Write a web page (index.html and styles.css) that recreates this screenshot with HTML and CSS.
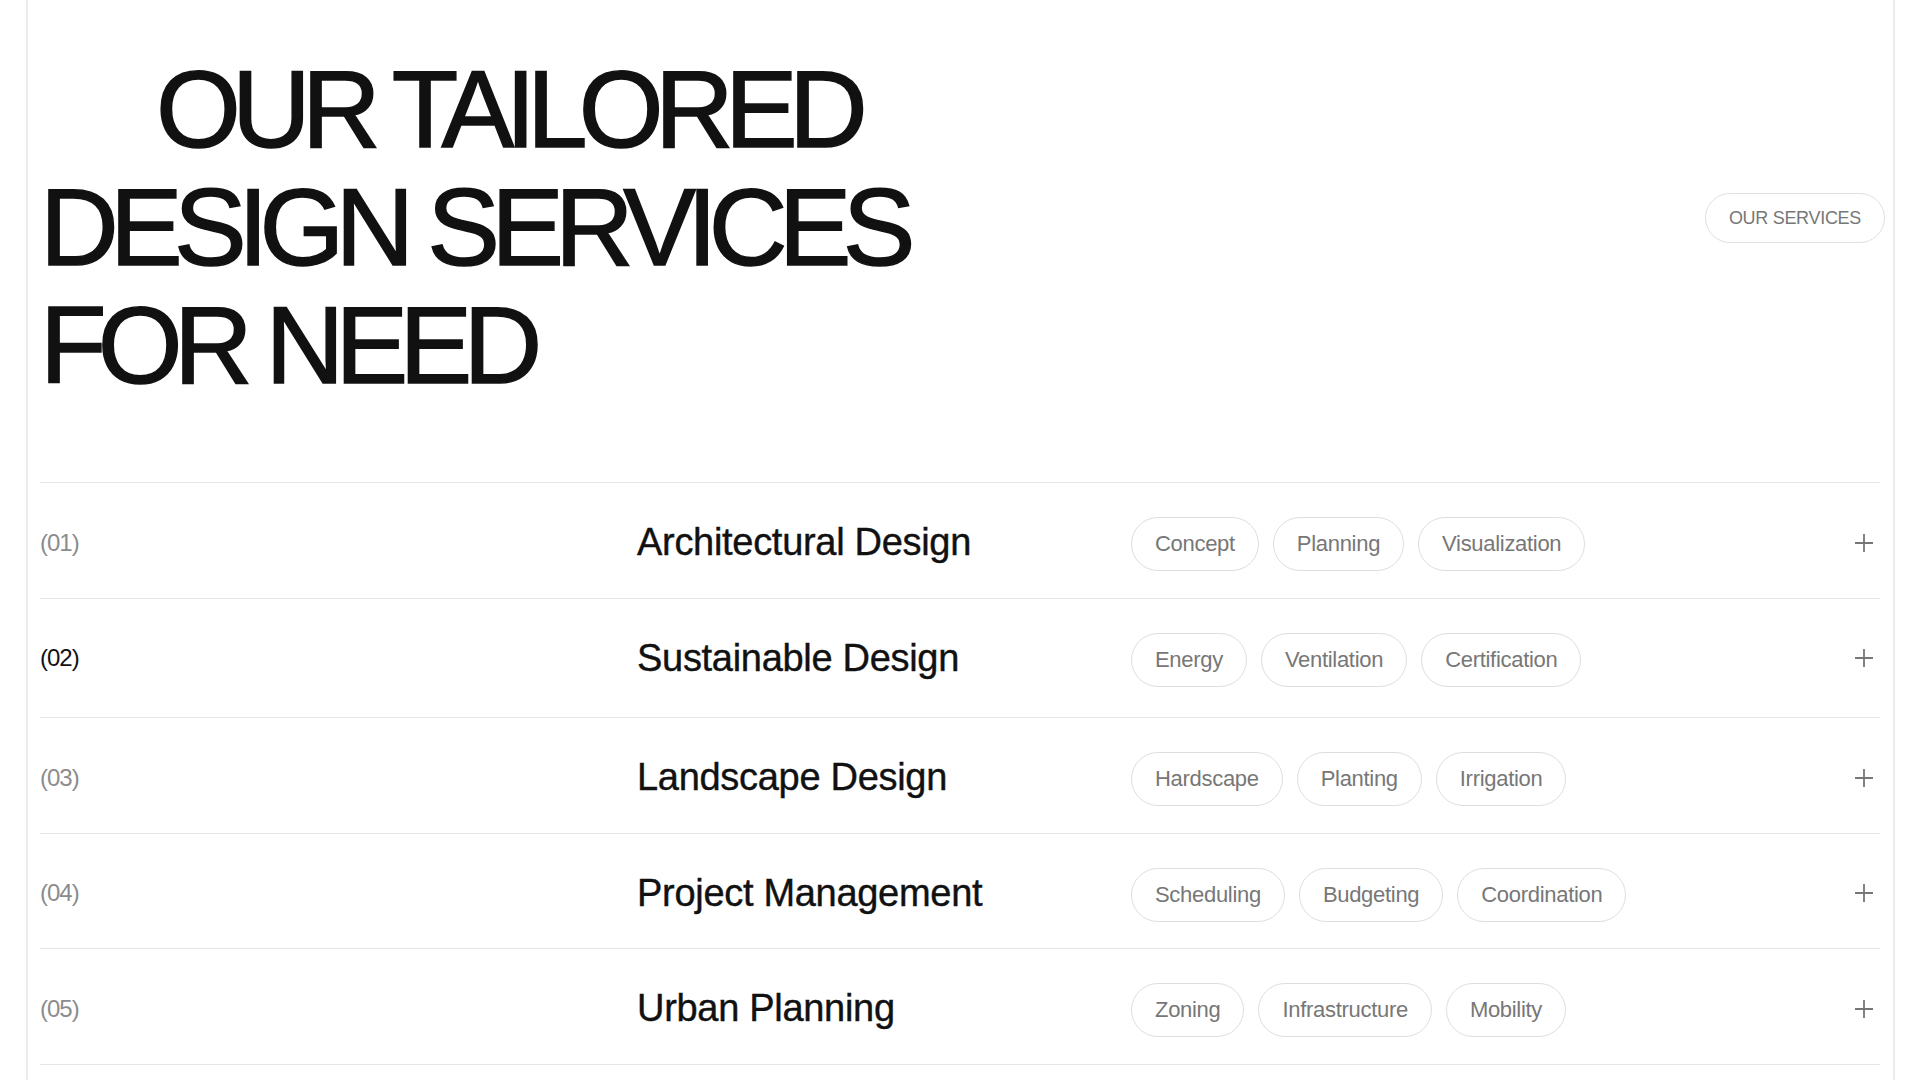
FILE: index.html
```html
<!DOCTYPE html>
<html lang="en">

<head>
    <meta charset="UTF-8">
    <meta name="viewport" content="width=device-width, initial-scale=1.0">
    <title>Our Services</title>
    <link rel="stylesheet" href="styles.css">
</head>

<body>
    <section class="services">
        <header class="services-head">
            <h1 class="services-title">OUR TAILORED<br>DESIGN SERVICES<br>FOR NEED</h1>
            <span class="section-tag">OUR SERVICES</span>
        </header>

        <ul class="service-list">
            <li class="service-row">
                <span class="service-num">(01)</span>
                <h3 class="service-name">Architectural Design</h3>
                <div class="service-tags">
                    <span class="tag">Concept</span>
                    <span class="tag">Planning</span>
                    <span class="tag">Visualization</span>
                </div>
                <button class="service-toggle" type="button" aria-label="Open">
                    <svg viewBox="0 0 20 20" width="20" height="20"><path d="M10 1v18M1 10h18"/></svg>
                </button>
            </li>
            <li class="service-row active">
                <span class="service-num">(02)</span>
                <h3 class="service-name">Sustainable Design</h3>
                <div class="service-tags">
                    <span class="tag">Energy</span>
                    <span class="tag">Ventilation</span>
                    <span class="tag">Certification</span>
                </div>
                <button class="service-toggle" type="button" aria-label="Open">
                    <svg viewBox="0 0 20 20" width="20" height="20"><path d="M10 1v18M1 10h18"/></svg>
                </button>
            </li>
            <li class="service-row">
                <span class="service-num">(03)</span>
                <h3 class="service-name">Landscape Design</h3>
                <div class="service-tags">
                    <span class="tag">Hardscape</span>
                    <span class="tag">Planting</span>
                    <span class="tag">Irrigation</span>
                </div>
                <button class="service-toggle" type="button" aria-label="Open">
                    <svg viewBox="0 0 20 20" width="20" height="20"><path d="M10 1v18M1 10h18"/></svg>
                </button>
            </li>
            <li class="service-row">
                <span class="service-num">(04)</span>
                <h3 class="service-name">Project Management</h3>
                <div class="service-tags">
                    <span class="tag">Scheduling</span>
                    <span class="tag">Budgeting</span>
                    <span class="tag">Coordination</span>
                </div>
                <button class="service-toggle" type="button" aria-label="Open">
                    <svg viewBox="0 0 20 20" width="20" height="20"><path d="M10 1v18M1 10h18"/></svg>
                </button>
            </li>
            <li class="service-row">
                <span class="service-num">(05)</span>
                <h3 class="service-name">Urban Planning</h3>
                <div class="service-tags">
                    <span class="tag">Zoning</span>
                    <span class="tag">Infrastructure</span>
                    <span class="tag">Mobility</span>
                </div>
                <button class="service-toggle" type="button" aria-label="Open">
                    <svg viewBox="0 0 20 20" width="20" height="20"><path d="M10 1v18M1 10h18"/></svg>
                </button>
            </li>
        </ul>
    </section>
</body>

</html>
```

FILE: styles.css
```css
/* Services section */

body {
    margin: 0;
    padding: 0;
    background-color: #fff;
    color: #111;
    font-family: "Liberation Sans", Arial, Helvetica, sans-serif;
}

.services {
    min-height: 100vh;
    margin: 0 25px 0 26px;
    padding: 0 13px 0 12px;
    border-left: 2px solid #ebebeb;
    border-right: 2px solid #ebebeb;
    box-sizing: border-box;
}

.services-head {
    display: flex;
    justify-content: space-between;
    align-items: center;
    padding-top: 50px;
}

.services-title {
    margin: 0;
    font-size: 109px;
    font-weight: 400;
    line-height: 118px;
    letter-spacing: -0.08em;
    text-indent: 116px;
    color: #111;
    -webkit-text-stroke: 1.5px #111;
}

.section-tag {
    margin: 0 -5px 19px 0;
    padding: 14px 23px;
    border: 1.5px solid #e0e0e0;
    border-radius: 30px;
    font-size: 18px;
    line-height: 20px;
    letter-spacing: -0.3px;
    color: #777;
}

.service-list {
    list-style: none;
    margin: 78px 0 0;
    padding: 0;
    border-top: 1.5px solid #e6e6e6;
}

.service-row {
    display: grid;
    grid-template-columns: 597px 494px 1fr auto;
    align-items: center;
    height: 109.5px;
    padding-top: 5px;
    border-bottom: 1.5px solid #e6e6e6;
}

/* open row: darker index and a bit more room below */
.service-row.active {
    padding-bottom: 4px;
}

.service-num {
    font-size: 24px;
    letter-spacing: -1px;
    color: #8c8c8c;
}

.service-row.active .service-num {
    color: #111;
}

.service-name {
    margin: 0;
    font-size: 38px;
    font-weight: 400;
    letter-spacing: -0.3px;
    color: #111;
    -webkit-text-stroke: 0.4px #111;
}

.service-tags {
    display: flex;
    gap: 14px;
    padding-top: 3px;
}

.tag {
    padding: 15px 23px;
    border: 1.5px solid #dedede;
    border-radius: 30px;
    font-size: 22px;
    line-height: 22px;
    letter-spacing: -0.3px;
    color: #777;
}

.service-toggle {
    display: flex;
    align-items: center;
    justify-content: center;
    width: 30px;
    height: 30px;
    margin-right: 1px;
    padding: 0;
    border: none;
    background: none;
    cursor: pointer;
}

.service-toggle svg {
    stroke: #777;
    stroke-width: 1.8;
    fill: none;
}
```
